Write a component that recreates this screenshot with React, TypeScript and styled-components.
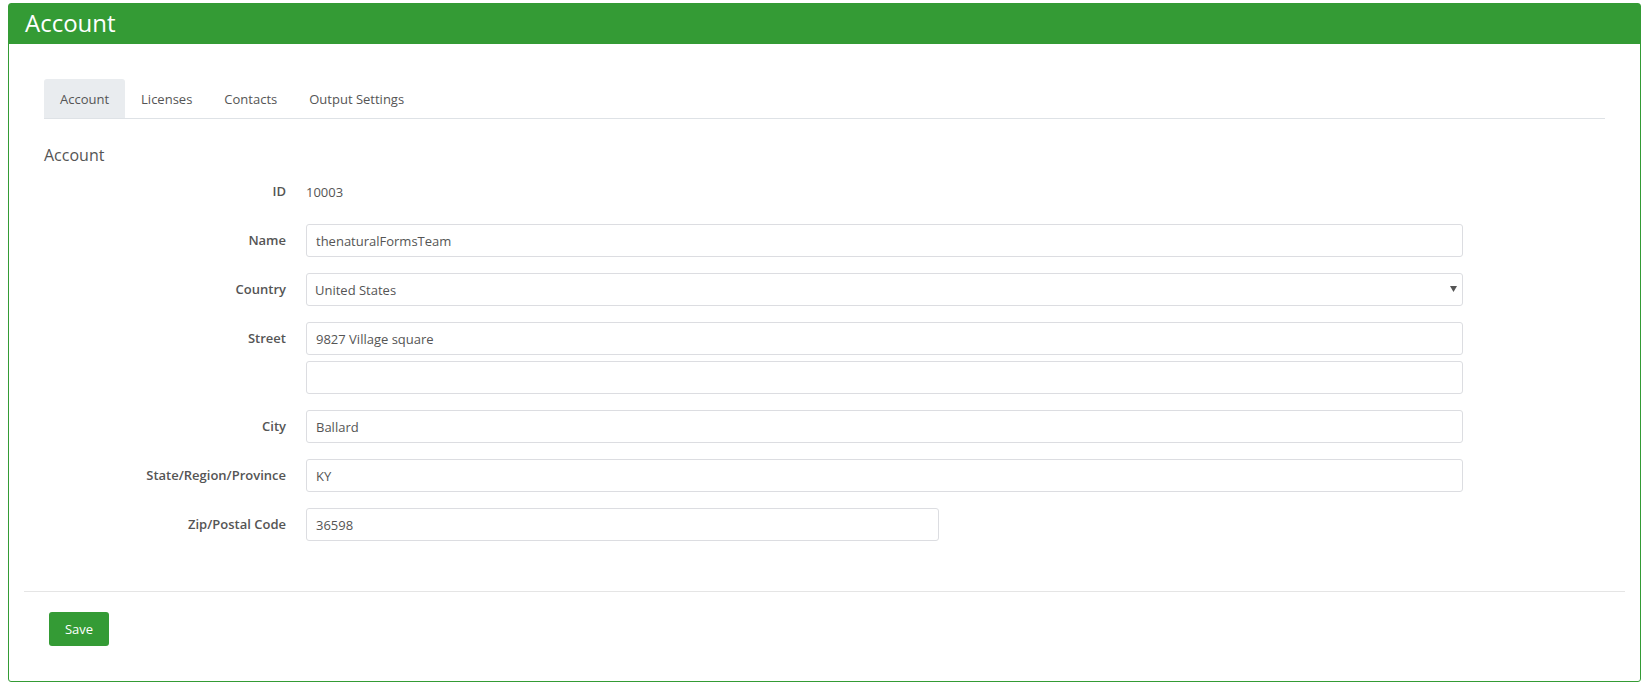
import React from "react";
import styled, { createGlobalStyle } from "styled-components";

const GREEN = "#349b35";

const Global = createGlobalStyle`
  html, body { margin: 0; padding: 0; background: #fff; }
  body { font-family: "Open Sans", "Liberation Sans", sans-serif; color: #555; }
  * { box-sizing: border-box; }
`;

const Page = styled.div`
  padding: 3px 8px 0 8px;
`;

const Panel = styled.section`
  border: 1px solid ${GREEN};
  border-radius: 3px;
  background: #fff;
`;

const PanelHeader = styled.header`
  background: ${GREEN};
  height: 40px;
  padding: 0 16px;
  color: #fff;
  font-size: 24px;
  line-height: 37px;
  font-weight: 400;
`;

const PanelBody = styled.div`
  padding: 35px 35px 50px 35px;
`;

const Tabs = styled.nav`
  display: flex;
  border-bottom: 1px solid #dee2e6;
  height: 40px;
`;

const Tab = styled.div<{ $active?: boolean }>`
  height: 39px;
  padding: 0 16px;
  display: flex;
  align-items: center;
  font-size: 13px;
  color: #555;
  background: ${(p) => (p.$active ? "#e9ecef" : "transparent")};
  border-radius: 3px 3px 0 0;
`;

const SectionTitle = styled.h3`
  margin: 25px 0 9px 0;
  font-size: 16px;
  line-height: 22px;
  font-weight: 400;
  color: #555;
`;

const FormGrid = styled.div`
  display: grid;
  grid-template-columns: 242px 1157px;
  column-gap: 20px;
  row-gap: 16px;
`;

const Label = styled.label`
  font-size: 13px;
  font-weight: 600;
  color: #555;
  text-align: right;
  height: 33px;
  line-height: 33px;
`;

const Static = styled.div`
  font-size: 13px;
  color: #555;
  height: 33px;
  line-height: 34px;
`;

const Stack = styled.div`
  display: flex;
  flex-direction: column;
  gap: 6px;
`;

const Input = styled.input<{ $width?: string }>`
  display: block;
  width: ${(p) => p.$width || "100%"};
  height: 33px;
  border: 1px solid #dcdde1;
  border-radius: 3px;
  padding: 0 9px;
  font-family: "Open Sans", "Liberation Sans", sans-serif;
  font-size: 13px;
  color: #555;
  background: #fff;
  outline: none;
`;

const SelectWrap = styled.div`
  position: relative;
`;

const Select = styled.select`
  display: block;
  width: 100%;
  height: 33px;
  border: 1px solid #dcdde1;
  border-radius: 3px;
  padding: 0 9px 0 8px;
  font-family: "Open Sans", "Liberation Sans", sans-serif;
  font-size: 13px;
  color: #555;
  background: #fff;
  appearance: none;
  -webkit-appearance: none;
  outline: none;
`;

const Caret = styled.svg`
  position: absolute;
  right: 6px;
  top: 13px;
  pointer-events: none;
`;

const Footer = styled.div`
  margin: 0 15px;
  border-top: 1px solid #e5e5e5;
  padding: 20px 0 35px 25px;
`;

const SaveButton = styled.button`
  width: 60px;
  height: 34px;
  border: none;
  border-radius: 3px;
  background: ${GREEN};
  color: #fff;
  font-family: "Open Sans", "Liberation Sans", sans-serif;
  font-size: 13px;
  cursor: pointer;
`;

export default function App() {
  return (
    <>
      <Global />
      <Page>
        <Panel>
          <PanelHeader>Account</PanelHeader>
          <PanelBody>
            <Tabs>
              <Tab $active>Account</Tab>
              <Tab>Licenses</Tab>
              <Tab>Contacts</Tab>
              <Tab>Output Settings</Tab>
            </Tabs>
            <SectionTitle>Account</SectionTitle>
            <FormGrid>
              <Label>ID</Label>
              <Static>10003</Static>

              <Label>Name</Label>
              <Input defaultValue="thenaturalFormsTeam" />

              <Label>Country</Label>
              <SelectWrap>
                <Select defaultValue="US">
                  <option value="US">United States</option>
                </Select>
                <Caret width="7" height="6" viewBox="0 0 7 6">
                  <path d="M0 0 H7 L3.5 6 Z" fill="#555" />
                </Caret>
              </SelectWrap>

              <Label>Street</Label>
              <Stack>
                <Input defaultValue="9827 Village square" />
                <Input defaultValue="" />
              </Stack>

              <Label>City</Label>
              <Input defaultValue="Ballard" />

              <Label>State/Region/Province</Label>
              <Input defaultValue="KY" />

              <Label>Zip/Postal Code</Label>
              <Input defaultValue="36598" $width="633px" />
            </FormGrid>
          </PanelBody>
          <Footer>
            <SaveButton>Save</SaveButton>
          </Footer>
        </Panel>
      </Page>
    </>
  );
}
